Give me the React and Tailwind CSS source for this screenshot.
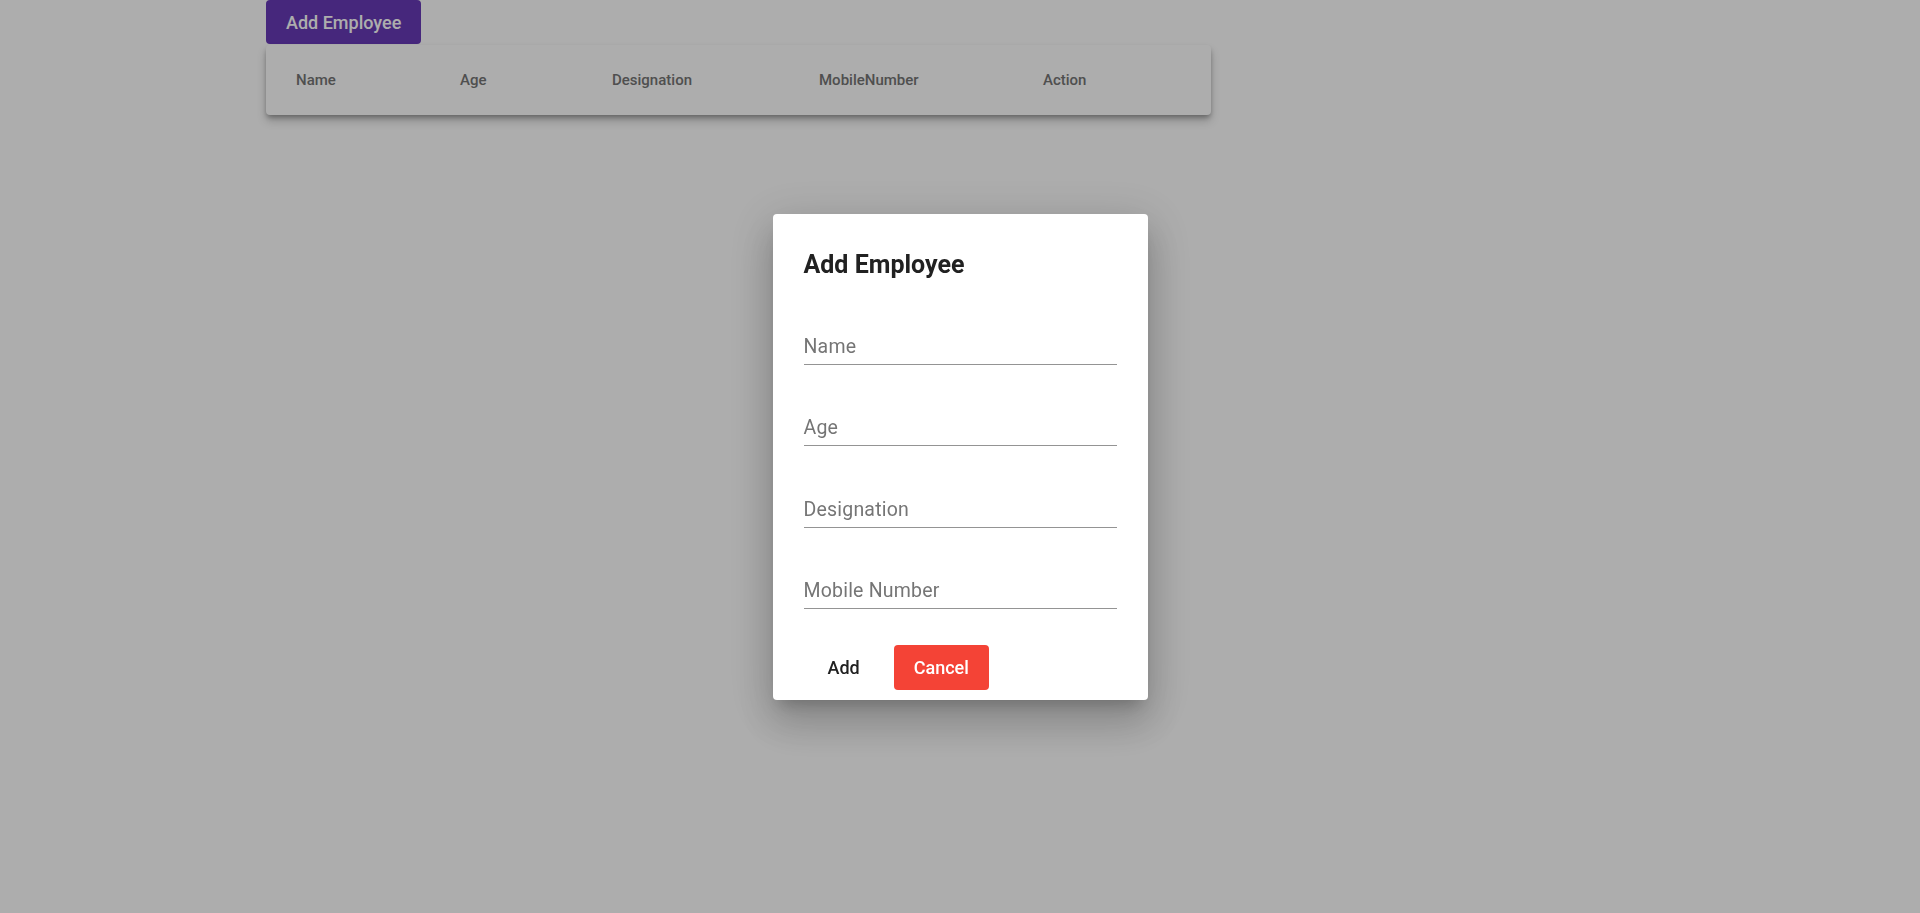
import React from 'react';

const columns = ['Name', 'Age', 'Designation', 'MobileNumber', 'Action'];
const fields = ['Name', 'Age', 'Designation', 'Mobile Number'];

function EmployeeTable() {
  return (
    <div className="w-[945px] bg-white rounded-[4px] shadow-[0_3px_5px_-1px_rgba(0,0,0,0.3),0_6px_10px_0_rgba(0,0,0,0.2)]">
      <div className="grid grid-cols-[164px_152px_207px_224px_1fr] pl-[30px] h-[70px] items-center">
        {columns.map((c) => (
          <div key={c} className="text-[15px] font-medium text-[#757575]">
            {c}
          </div>
        ))}
      </div>
    </div>
  );
}

function AddDialog() {
  return (
    <div className="fixed inset-0 z-10 flex items-center justify-center bg-black/[0.32]">
      <div className="w-[375px] h-[486px] bg-white rounded-[4px] shadow-[0_11px_15px_-7px_rgba(0,0,0,0.2),0_24px_38px_3px_rgba(0,0,0,0.14),0_9px_46px_8px_rgba(0,0,0,0.12)] flex flex-col pt-[35px] pl-[31px] pr-[31px]">
        <h2 className="text-[25px] leading-[32px] font-bold text-[#212121]">Add Employee</h2>
        <div className="mt-[54px] flex flex-col gap-[51.67px]">
          {fields.map((f) => (
            <div key={f} className="border-b border-[#949494] pb-[5px]">
              <div className="text-[19.5px] leading-[24px] tracking-[0.2px] text-[#757575]">{f}</div>
            </div>
          ))}
        </div>
        <div className="mt-[36px] flex items-center gap-[14px] pl-[4px]">
          <button className="h-[45px] px-[20px] text-[18px] font-medium text-[#212121] rounded-[4px]">
            Add
          </button>
          <button className="h-[45px] px-[20px] text-[18px] font-medium text-white bg-[#f44336] rounded-[4px]">
            Cancel
          </button>
        </div>
      </div>
    </div>
  );
}

export default function App() {
  return (
    <div className="min-h-[913px] bg-white font-['Roboto',sans-serif]">
      <div className="pl-[266px] flex flex-col items-start gap-[1px]">
        <button className="h-[44px] px-[20px] bg-[#673ab7] text-white text-[18px] font-medium rounded-[4px]">
          Add Employee
        </button>
        <EmployeeTable />
      </div>
      <AddDialog />
    </div>
  );
}
